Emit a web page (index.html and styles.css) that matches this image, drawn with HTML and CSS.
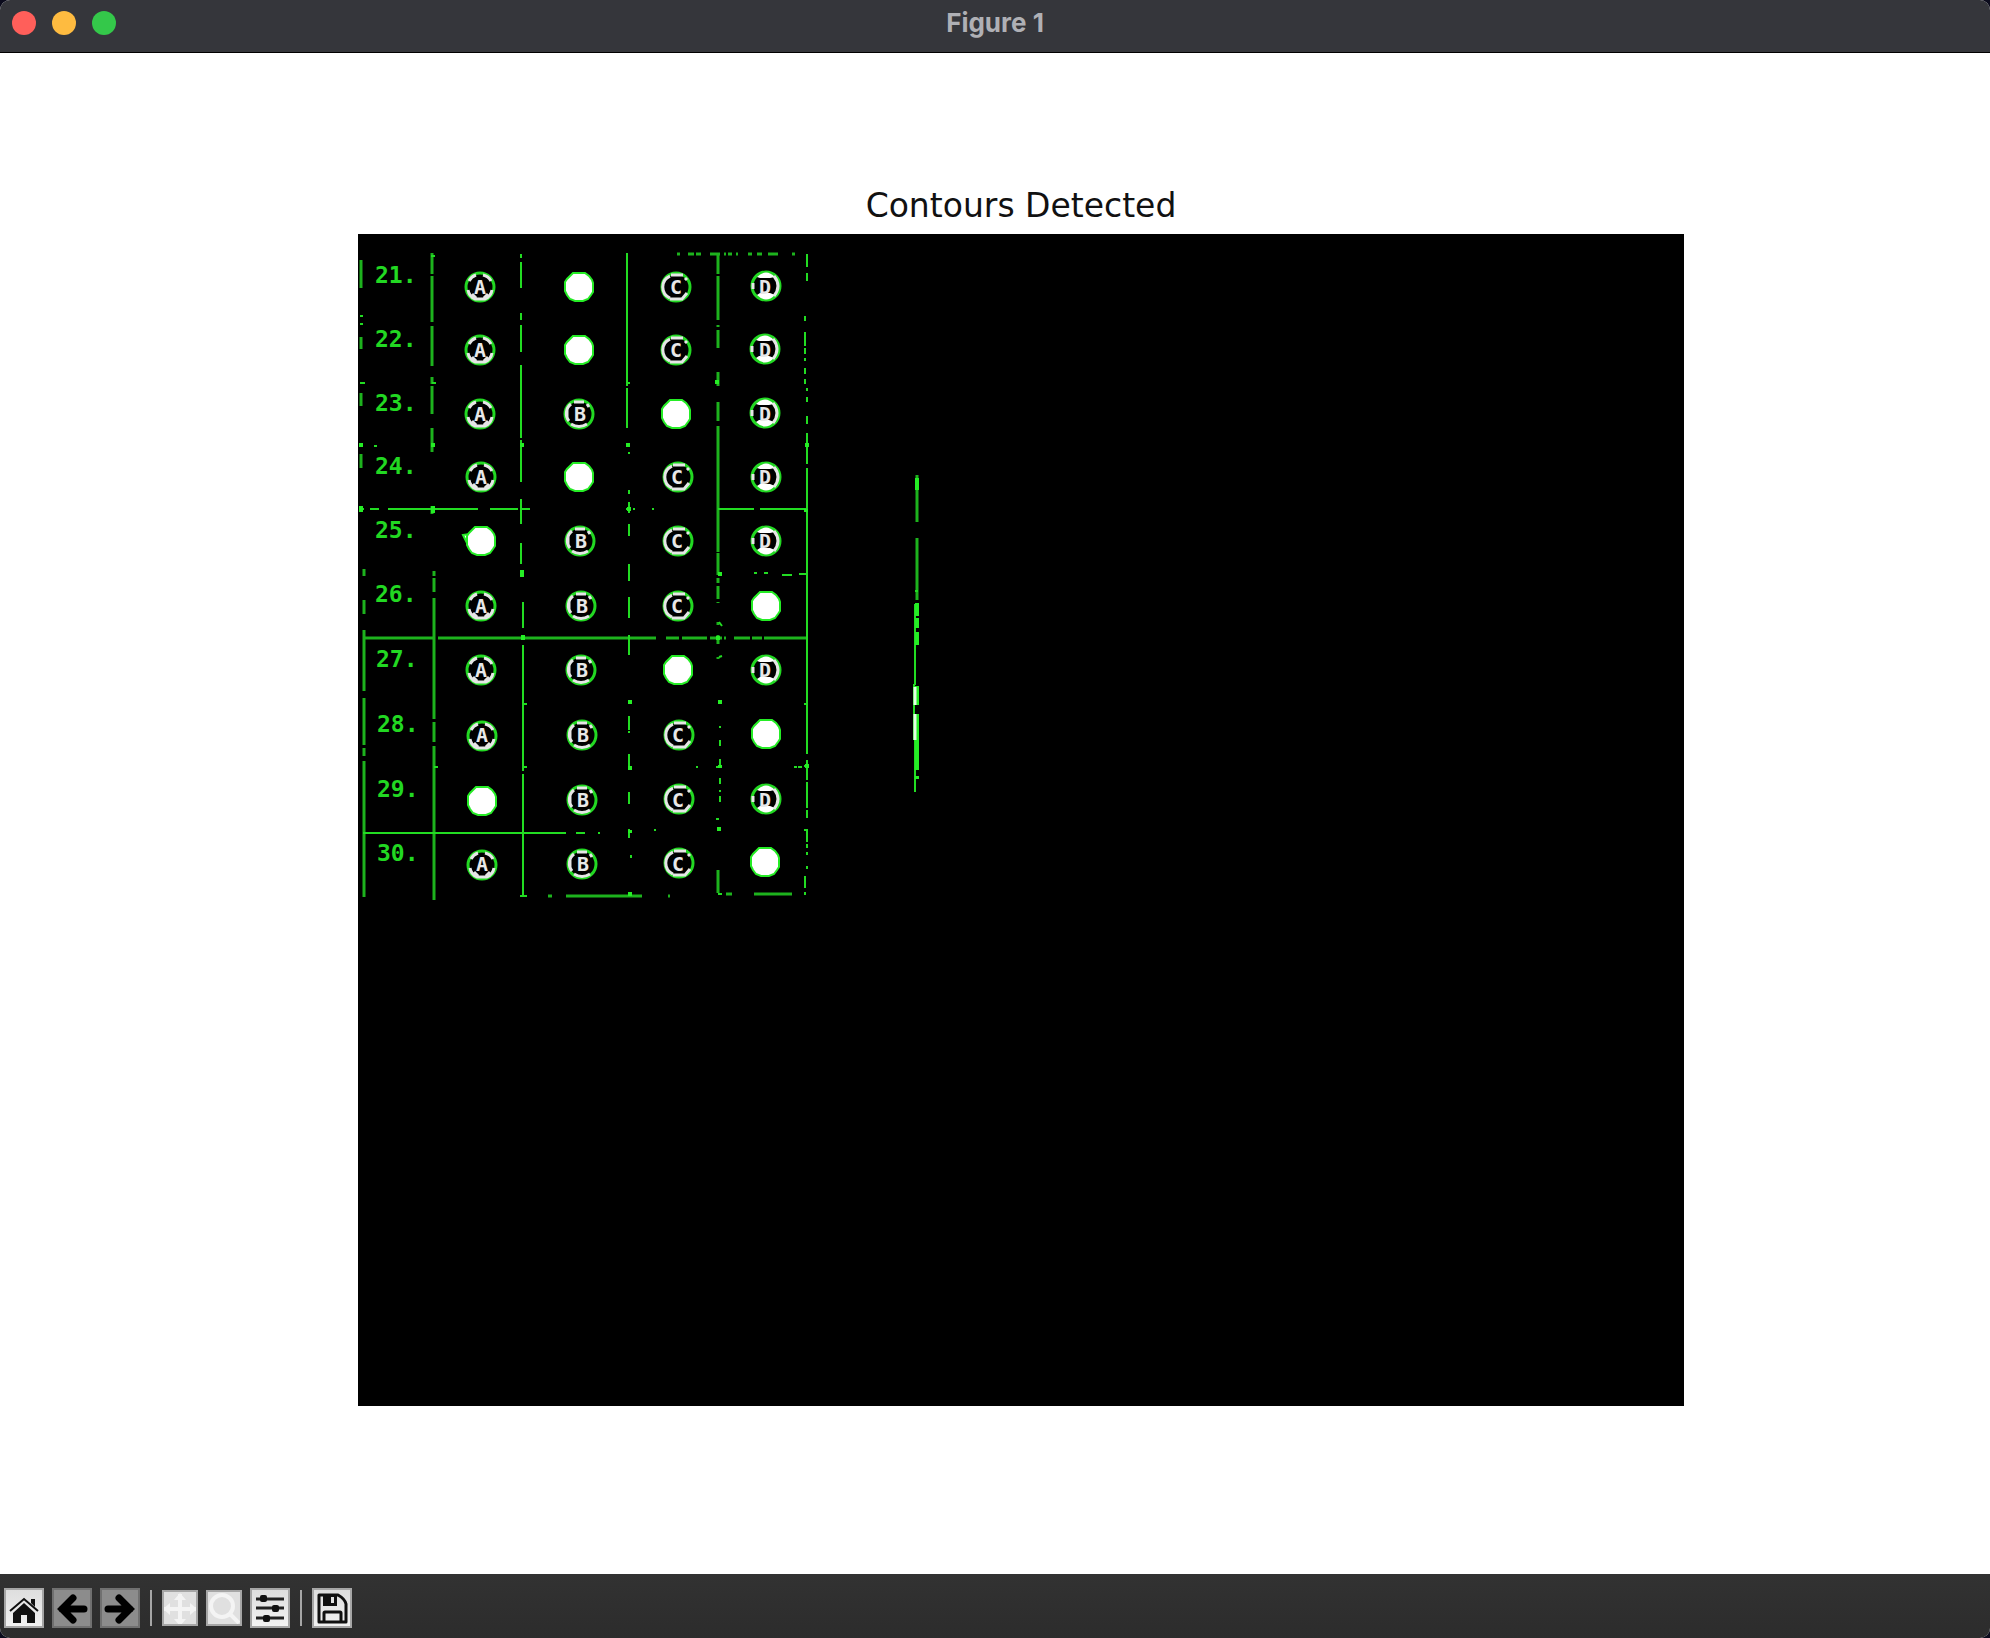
FILE: index.html
```html
<!DOCTYPE html>
<html lang="en">
<head>
<meta charset="utf-8">
<title>Figure 1</title>
<link rel="stylesheet" href="styles.css">
</head>
<body>
<div class="window">
  <header class="titlebar">
    <div class="lights">
      <button class="light close" aria-label="Close"></button>
      <button class="light minimize" aria-label="Minimize"></button>
      <button class="light maximize" aria-label="Zoom window"></button>
    </div>
    <h1 class="window-title">Figure 1</h1>
  </header>

  <main class="canvas">
    <h2 class="plot-title">Contours Detected</h2>
    <svg class="plot" viewBox="358 234 1326 1172" role="img" aria-label="Detected contours">
      <defs>
        <path id="full" d="M-6 -14H6L10 -11L13 -7L14 -4V5L12 8L9 12L4 14H-4L-9 12L-12 8L-14 4V-5L-12 -8Z" fill="#fff" stroke="#25ec25" stroke-width="2"/>
        <g id="ra"><circle r="14" class="ring"/><path class="inner" d="M-11 -6A12 12 0 0 1 -4 -12M3 -12A12 12 0 0 1 11 -6M-12 3A12 12 0 0 0 -5 12H5A12 12 0 0 0 12 3M-8 7L-4 11M8 7L4 11"/></g>
        <g id="rb"><circle r="14" class="ring"/><path class="inner" d="M-10 7A12 12 0 0 1 -8 -10M-12 -4V4M-5 -12H5M-8 10Q0 15 8 10M10 -7L8 -10"/></g>
        <g id="rc"><circle r="14" class="ring"/><path class="inner" d="M-6 11A12 12 0 0 1 -6 -11M-5 -12H7M11 -7L9 -9M-6 12H6L11 6"/></g>
        <g id="rd"><circle r="14" class="ring"/><path class="fillring" d="M-9 -9Q0 -18 9 -9L4 -8H-6ZM-9 9Q0 18 9 9L4 7H-6Z"/><path class="inner" d="M-13 -3V3M8 -10Q16 0 8 10"/></g>
      </defs>
      <rect x="358" y="234" width="1326" height="1172" fill="#000"/>

      <!-- rules two source pixels wide -->
      <path class="wide" d="M361 260V288M361 337V349M361 393V406M361 454V468M364 569V576M364 600V614M364 630V691M364 698V745M364 748V756M364 761V897
        M432 253V274M432 276V322M432 326V366M432 377V384M432 386V414M432 428V452M432 506V514M434 571V576M434 578V592M434 598V719M434 722V742M434 746V900
        M718 253V274M718 276V320M718 325V327M718 330V348M718 372V386M718 402V421M718 426V552M718 553V575M718 578V583M718 586V599M718 602V603M718 622V625M718 635V644M718 657V659M718 870V893
        M677 254H680M688 254H694M696 254H701M710 254H720M724 254H726M728 254H732M736 254H738M748 254H752M757 254H762M768 254H778M792 254H795
        M363 638H434M438 638H656M666 638H679M682 638H707M710 638H722M724 638H726M734 638H750M752 638H762M764 638H807
        M548 896H552M566 896H642M668 896H670M726 894H732M754 894H792M917 475V522M917 538V600"/>
      <!-- rules one source pixel wide -->
      <path class="thin" d="M521 254V258M521 262V288M521 313V320M521 325V352M521 365V438M521 440V482M521 499V524M521 543V564M523 602V628M523 645V771M523 774V897
        M627 253V386M627 388V428M629 452V454M629 490V494M629 502V513M629 524V536M629 564V581M629 597V618M629 635V655M629 716V730M629 731V733M629 754V769M629 792V804M629 829V838M631 855V858
        M720 726V728M720 740V746M720 759V768M720 778V784M720 790V792M720 796V802M719 657L722 656M719 622L722 626
        M807 254V267M807 273V281M805 316V321M805 332V346M805 348V354M805 358V361M805 368V374M805 379V384M807 388V391M807 397V402M807 416V424M807 433V464M807 468V754M807 760V780M807 782V808M807 810V818M807 829V842M807 844V848M807 852V855M807 866V869M805 876V888M805 892V895
        M360 509H364M370 509H379M388 509H478M490 509H518M520 509H530M626 509H631M633 509H635M652 509H654M718 509H754M760 509H807
        M754 573H757M764 573H768M782 575H792M799 574H807M434 767H438M524 767H527M696 767H698M716 767H722M794 767H797M798 767H802
        M363 833H566M576 833H585M598 833H600M654 830H656M716 819H719M520 896H527M718 894H722M804 830H808
        M360 316H363M360 324H363M360 383H365M374 446H377M431 256H435M432 383H436M627 383H630M804 704H807M804 766H808M524 704H527"/>
      <!-- junction specks -->
      <path class="speck" d="M361 443V447M433 443V447M522 443V447M628 443V447M807 443V447M361 506V512M433 506V513M522 570V577M523 635V640M629 507V511M717 380V384M720 572V576M718 636V640M630 700V704M720 700V704M630 766V770M720 765V768M630 830V833M719 827V831M630 892V896M806 509V512M807 764V768"/>
      <!-- long stray contour -->
      <path class="thin" d="M915 604V685M914 684V740M915 740V792M915 591H918"/>
      <path class="speck" d="M917 478V490M917 603V616M917 618V628M917 632V645M917 686V705M917 714V770M917 776V779"/>
      <path class="core" d="M915 687V705M915 714V740"/>

      <g>
        <use href="#ra" x="480" y="287"/><use href="#full" x="579" y="287"/><use href="#rc" x="676" y="287"/><use href="#rd" x="766" y="286"/>
        <use href="#ra" x="480" y="350"/><use href="#full" x="579" y="350"/><use href="#rc" x="676" y="350"/><use href="#rd" x="765" y="349"/>
        <use href="#ra" x="480" y="414"/><use href="#rb" x="579" y="414"/><use href="#full" x="676" y="414"/><use href="#rd" x="765" y="413"/>
        <use href="#ra" x="481" y="477"/><use href="#full" x="579" y="477"/><use href="#rc" x="678" y="477"/><use href="#rd" x="766" y="477"/>
        <path d="M463 535L470 534L468 545Z" fill="#fff" stroke="#25ec25" stroke-width="2"/>
        <use href="#full" x="481" y="541"/><use href="#rb" x="580" y="541"/><use href="#rc" x="678" y="541"/><use href="#rd" x="766" y="541"/>
        <use href="#ra" x="481" y="606"/><use href="#rb" x="581" y="606"/><use href="#rc" x="678" y="606"/><use href="#full" x="766" y="606"/>
        <use href="#ra" x="481" y="670"/><use href="#rb" x="581" y="670"/><use href="#full" x="678" y="670"/><use href="#rd" x="766" y="670"/>
        <use href="#ra" x="482" y="736"/><use href="#rb" x="582" y="735"/><use href="#rc" x="679" y="735"/><use href="#full" x="766" y="734"/>
        <use href="#full" x="482" y="801"/><use href="#rb" x="582" y="800"/><use href="#rc" x="679" y="799"/><use href="#rd" x="766" y="799"/>
        <use href="#ra" x="482" y="865"/><use href="#rb" x="582" y="864"/><use href="#rc" x="679" y="863"/><use href="#full" x="765" y="862"/>
      </g>
      <g class="letters">
        <text x="480 676 765" y="294">ACD</text>
        <text x="480 676 765" y="357">ACD</text>
        <text x="480 580 765" y="421">ABD</text>
        <text x="481 677 765" y="484">ACD</text>
        <text x="581 677 765" y="548">BCD</text>
        <text x="481 582 677" y="613">ABC</text>
        <text x="481 582 765" y="677">ABD</text>
        <text x="482 583 678" y="742">ABC</text>
        <text x="583 678 765" y="807">BCD</text>
        <text x="482 583 678" y="871">ABC</text>
      </g>
      <g class="numbers">
        <text x="375" y="283">21.</text>
        <text x="375" y="347">22.</text>
        <text x="375" y="411">23.</text>
        <text x="375" y="474">24.</text>
        <text x="375" y="538">25.</text>
        <text x="375" y="602">26.</text>
        <text x="376" y="667">27.</text>
        <text x="377" y="732">28.</text>
        <text x="377" y="797">29.</text>
        <text x="377" y="861">30.</text>
      </g>
    </svg>
  </main>

  <nav class="toolbar" aria-label="Figure tools">
    <button class="tool" aria-label="Home"><svg viewBox="0 0 36 36"><path d="M18 13L29 23V33H21V25H15V33H7V23Z"/><path d="M4 21L18 9L32 21" fill="none" stroke="#111" stroke-width="2"/><path d="M25 9H29V17L25 13Z"/></svg></button>
    <button class="tool off" aria-label="Back"><svg viewBox="0 0 36 36"><path class="arrow" d="M30 19H8M19 8L8 19L19 30"/></svg></button>
    <button class="tool off" aria-label="Forward"><svg viewBox="0 0 36 36"><path class="arrow" d="M6 19H28M17 8L28 19L17 30"/></svg></button>
    <span class="divider"></span>
    <button class="tool small" aria-label="Pan"><svg viewBox="0 0 32 32"><path class="pale" d="M16 2V32M0 17H32"/><path class="tips" d="M10 8L16 1L22 8ZM10 27L16 34L22 27ZM6 11L-1 17L6 23ZM26 11L33 17L26 23Z"/></svg></button>
    <button class="tool small" aria-label="Zoom"><svg viewBox="0 0 32 32"><circle class="pale" cx="14" cy="14" r="11"/><path class="pale" d="M22 22L31 31"/></svg></button>
    <button class="tool" aria-label="Configure subplots"><svg viewBox="0 0 36 36"><path d="M4 9H32M4 18H32M4 28H32" stroke="#222" stroke-width="3"/><rect x="8" y="5" width="7" height="7" rx="2"/><rect x="20" y="15" width="7" height="7" rx="2"/><rect x="11" y="25" width="7" height="7" rx="2"/></svg></button>
    <span class="divider"></span>
    <button class="tool" aria-label="Save"><svg viewBox="0 0 36 36"><path d="M5 5H24Q31 9 32 14V32H5ZM10 32V23Q10 22 11 22H26Q27 22 27 23V32" fill="none" stroke="#111" stroke-width="3" stroke-linejoin="round"/><path d="M9 5H23V16H9ZM17 7V13H20V7Z" fill-rule="evenodd"/></svg></button>
  </nav>
</div>
</body>
</html>
```
FILE: styles.css
```css
* { box-sizing: border-box; }

body {
  margin: 0;
  background: #0b0b1c;
}

.window {
  display: flex;
  flex-direction: column;
  min-height: 100vh;
  overflow: hidden;
  border-radius: 10px;
  background: #fff;
}

.titlebar {
  display: grid;
  grid-template-columns: 1fr auto 1fr;
  align-items: center;
  height: 53px;
  padding: 0 12px 6px;
  background: #35363b;
  border-bottom: 1px solid #000;
}

.lights {
  display: flex;
  gap: 16px;
}

.light {
  width: 24px;
  height: 24px;
  padding: 0;
  border: 0;
  border-radius: 50%;
}

.close { background: #ff5f5a; }
.minimize { background: #febb40; }
.maximize { background: #34c84a; }

.window-title {
  margin: 0;
  font: 700 26px/32px Inter, sans-serif;
  color: #afb0b5;
}

.canvas {
  flex: 1;
  display: grid;
  grid-template-columns: 358fr 1326fr 306fr;
  align-content: start;
  row-gap: 8px;
  padding: 133px 0 64px;
}

.plot-title {
  grid-column: 2;
  margin: 0;
  text-align: center;
  font: 400 33px/40px "DejaVu Sans", sans-serif;
  color: #111;
}

.plot {
  grid-column: 2;
  display: block;
  width: 100%;
}

.wide { fill: none; stroke: #1db21d; stroke-width: 3; }
.thin { fill: none; stroke: #22dc22; stroke-width: 2; }
.speck { fill: none; stroke: #25ee25; stroke-width: 4; }
.core { fill: none; stroke: #e4ffe4; stroke-width: 3; }
.ring { fill: #000; stroke: #22d822; stroke-width: 3; }
.inner { fill: none; stroke: #e6e6e6; stroke-width: 3; }
.fillring { fill: #fff; }

.letters {
  font: 700 20px "DejaVu Sans Mono", monospace;
  fill: #e8e8e8;
  text-anchor: middle;
}

.numbers {
  font: 700 23px "DejaVu Sans Mono", monospace;
  fill: #22d822;
}

.toolbar {
  display: flex;
  align-items: center;
  gap: 8px;
  height: 64px;
  padding: 4px 4px 0;
  background: linear-gradient(#323232, #2c2c2c);
}

.tool {
  width: 40px;
  height: 40px;
  padding: 0;
  border: 2px solid #a6a6a6;
  background: linear-gradient(#dedede, #f2f2f2);
}

.tool svg {
  display: block;
  width: 100%;
  height: 100%;
  fill: #111;
}

.tool.off {
  border-color: #707070;
  background: #8c8c8c;
}

.tool.small {
  width: 36px;
  height: 36px;
  background: #e0e0e0;
}

.tool .arrow {
  fill: none;
  stroke: #000;
  stroke-width: 7;
  stroke-linecap: round;
}

.tool .pale {
  fill: none;
  stroke: #f4f4f4;
  stroke-width: 4;
}

.tool .tips { fill: #f4f4f4; }

.divider {
  width: 2px;
  height: 36px;
  margin: 0 2px;
  background: #a6a6a6;
}
```
